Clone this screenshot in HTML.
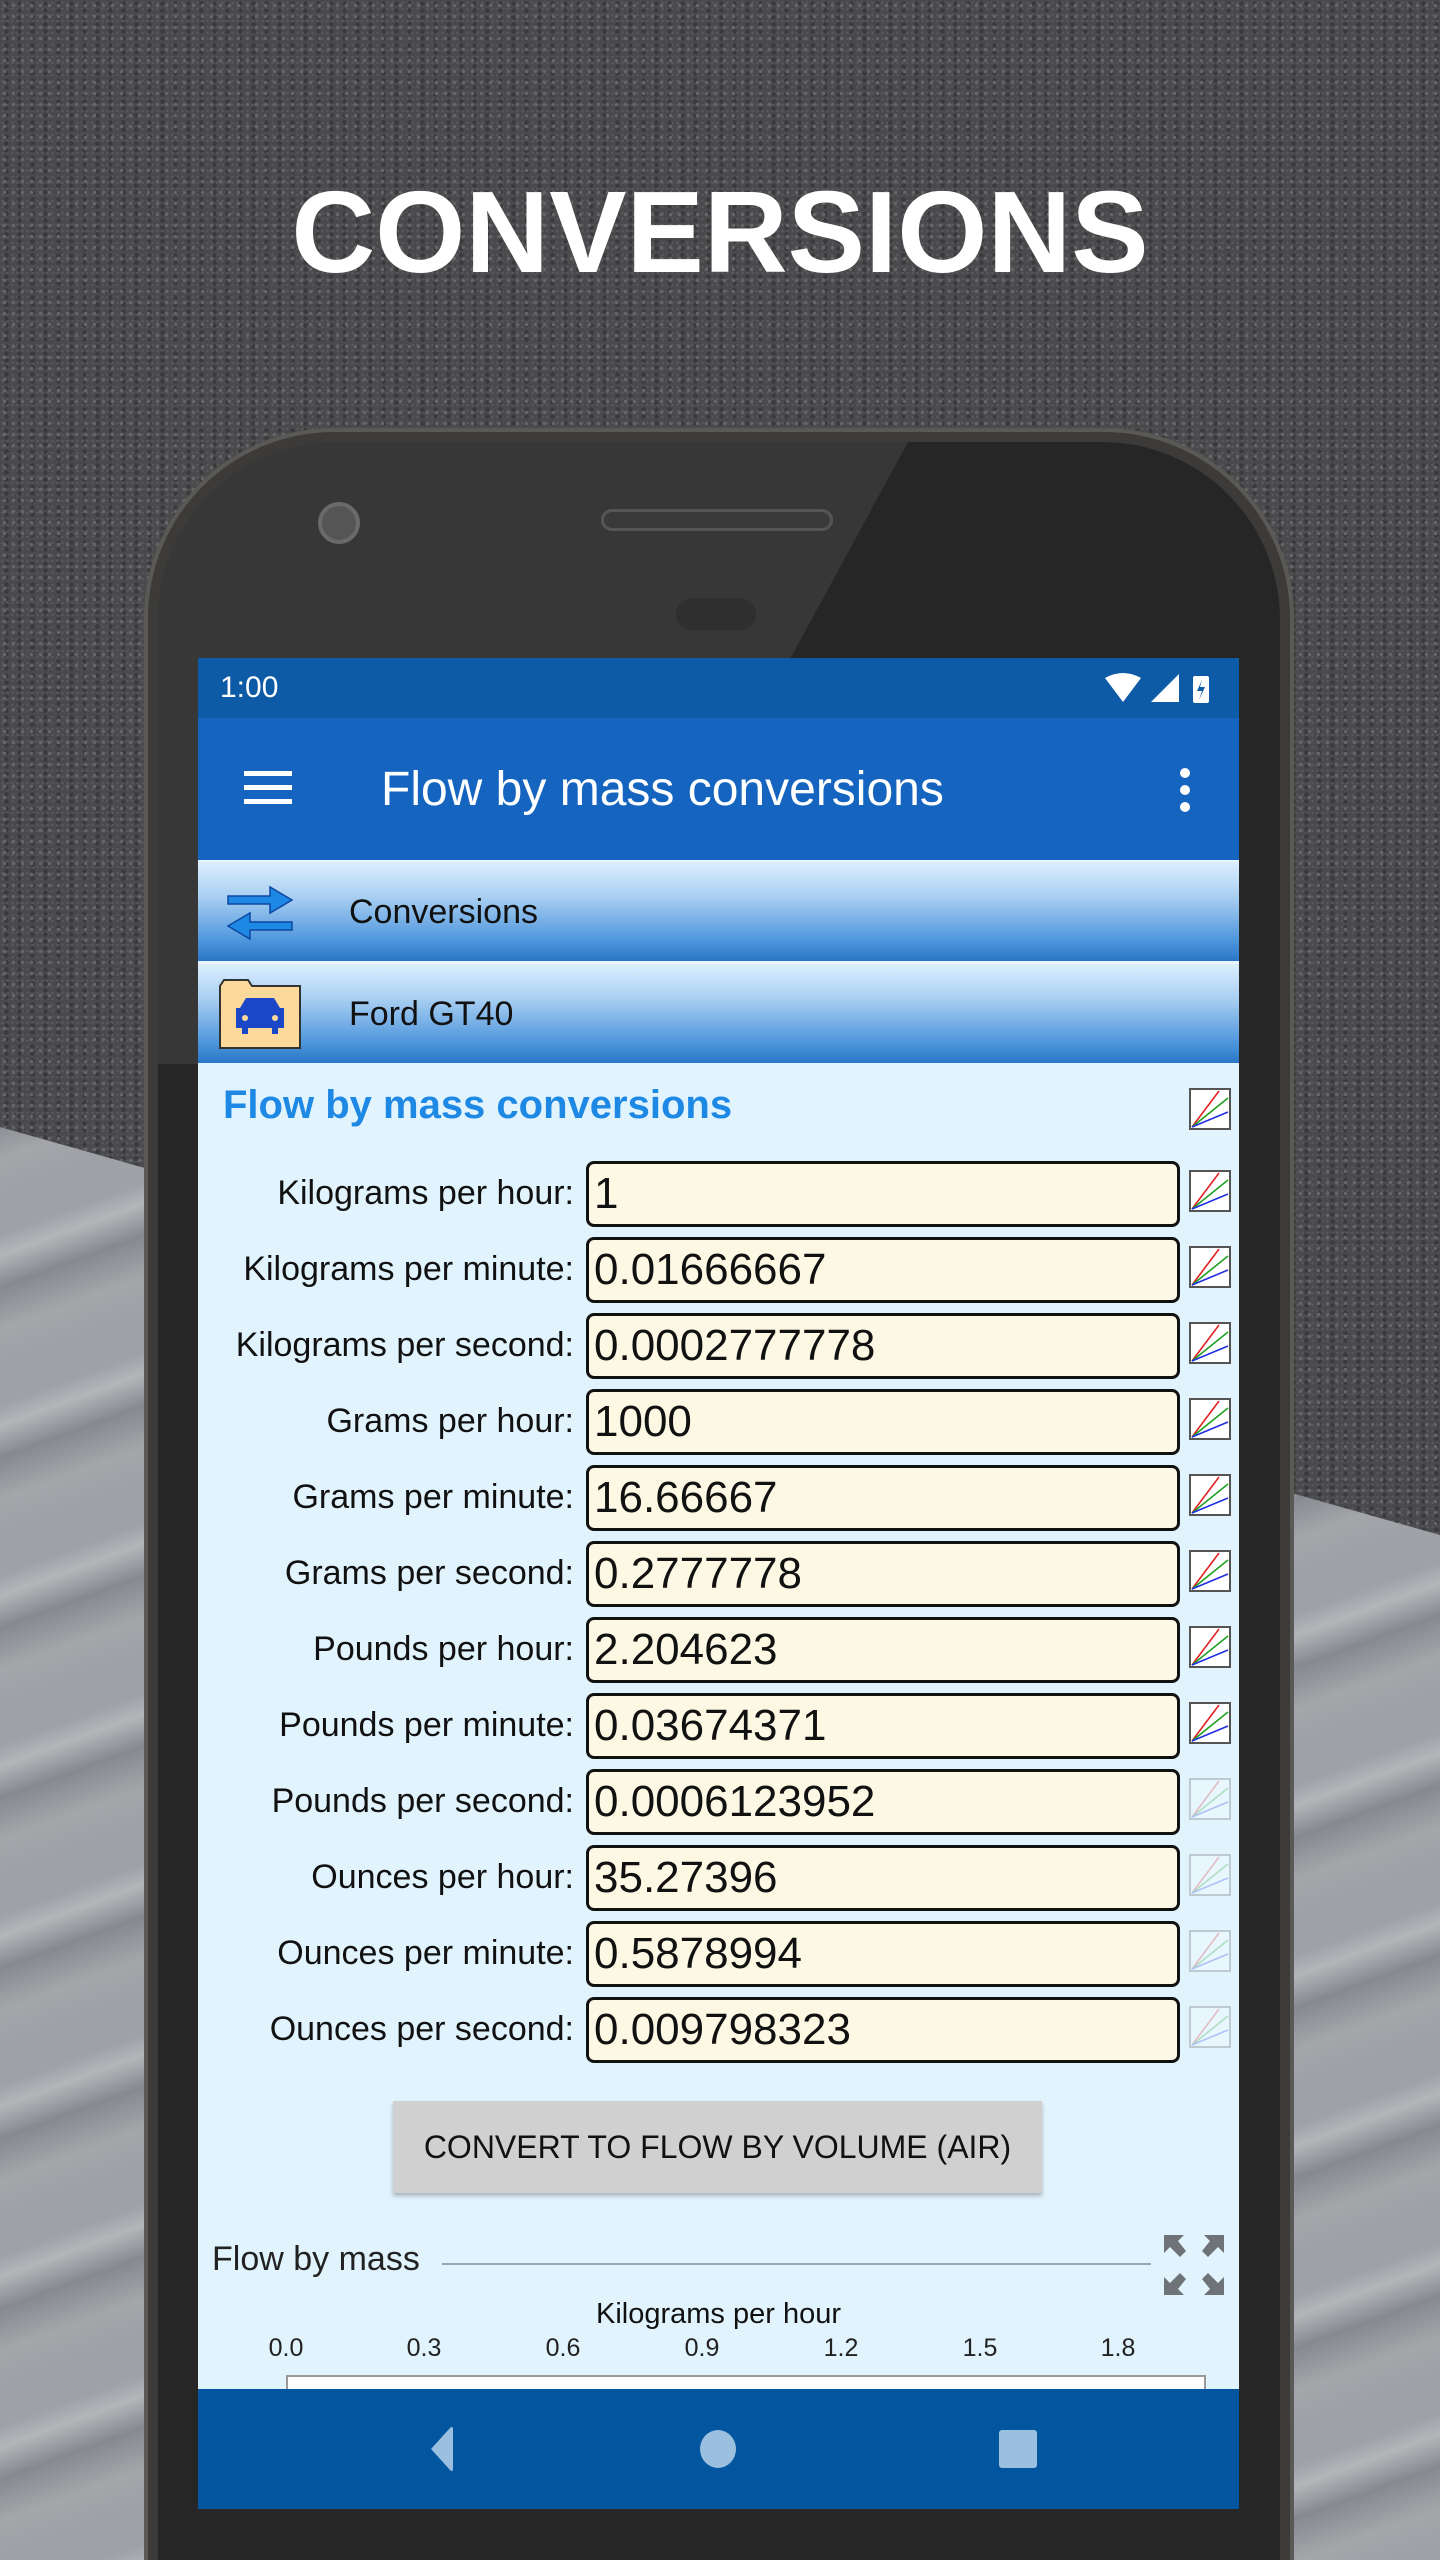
<!DOCTYPE html>
<html><head><meta charset="utf-8"><style>
*{margin:0;padding:0;box-sizing:border-box}
html,body{width:1440px;height:2560px;overflow:hidden}
body{position:relative;font-family:"Liberation Sans",sans-serif;background:#4b4b4d}
#wrap{position:absolute;left:0;top:0;width:1440px;height:2560px;overflow:hidden}
.abs{position:absolute}
#bg{left:0;top:0;width:1440px;height:2560px;background-color:#4a4a4c;background-image:radial-gradient(circle,#666668 1.5px,transparent 2px),radial-gradient(circle,#3a3a3c 2px,transparent 2.5px),radial-gradient(circle,#58585c 1px,transparent 1.5px);background-size:9px 11px,13px 7px,5px 6px}
#marble{left:0;top:0;width:1440px;height:2560px;background:repeating-linear-gradient(160deg,#9ea1a6 0 40px,#b3b5b9 60px,#86898e 90px,#a4a6aa 130px,#9ea1a6 160px);clip-path:polygon(0 1127px,1440px 1535px,1440px 2560px,0 2560px)}
h1{position:absolute;left:0;width:1440px;top:165px;text-align:center;color:#fff;font-size:116px;font-weight:bold}
#phone{left:144px;top:428px;width:1150px;height:2132px;border-radius:190px 190px 0 0;background:#3c3b39;border:4px solid #5a5956;border-bottom:none}
#bezel{left:158px;top:442px;width:1122px;height:2118px;border-radius:178px 178px 0 0;background:#262626;overflow:hidden}
#glare{left:0;top:0;width:1122px;height:622px;background:rgba(255,255,255,0.08);clip-path:polygon(0 0,750px 0,412px 622px,0 622px)}
#screen{left:198px;top:658px;width:1041px;height:1851px;background:#e1f3fd;overflow:hidden}
.sb{left:0;top:0;width:1041px;height:60px;background:#0d5aa6;color:#fff;font-size:30px;line-height:60px;padding-left:22px}
.ab{left:0;top:60px;width:1041px;height:142px;background:#1565c0;color:#fff}
.row{left:0;width:1041px;height:101px;background:linear-gradient(#dcefff 0%,#a9cff2 35%,#4d95dc 80%,#2a76c6 100%);border-top:2px solid #eaf5ff;font-size:34px;line-height:100px;color:#111}
.lab{position:absolute;right:665px;width:420px;text-align:right;font-size:34px;color:#111}
.inp{position:absolute;left:388px;width:594px;height:66px;background:#fdf8e4;border:3px solid #111;border-radius:8px;font-size:44px;line-height:60px;padding-left:5px;color:#111}
.ci{position:absolute;left:991px;width:42px;height:42px;background:#fff;border:2px solid #555}
.ci.f{opacity:.25}
.nav{left:0;top:1731px;width:1041px;height:120px;background:#02569f}
</style></head><body><div id="wrap">
<div class="abs" id="bg"></div>
<div class="abs" id="marble"></div>
<h1>CONVERSIONS</h1>
<div class="abs" id="phone"></div>
<div class="abs" id="bezel"><div class="abs" id="glare"></div></div>
<div class="abs" style="left:318px;top:502px;width:42px;height:42px;border-radius:50%;background:#555;border:4px solid #6a6a6a"></div>
<div class="abs" style="left:601px;top:509px;width:232px;height:22px;border-radius:11px;background:#3a3a3a;border:3px solid #555"></div>
<div class="abs" style="left:676px;top:598px;width:80px;height:32px;border-radius:16px;background:#2f2f2f"></div>
<div class="abs" id="screen">
 <div class="abs sb">1:00
  <svg class="abs" style="left:905px;top:14px" width="120" height="34" viewBox="0 0 120 34"><path d="M2 6 Q20 -4 38 6 L20 30Z" fill="#fff"/><path d="M48 30 L76 2 L76 30Z" fill="#fff"/><rect x="90" y="4" width="16" height="27" rx="2" fill="#fff"/><path d="M99 8 L94 19 L99 19 L96 28 L102 15 L97 15Z" fill="#0d5aa6"/></svg>
 </div>
 <div class="abs ab">
  <div class="abs" style="left:46px;top:53px;width:48px;height:5px;background:#fff;box-shadow:0 14px 0 #fff,0 28px 0 #fff"></div>
  <div class="abs" style="left:183px;top:44px;font-size:48px">Flow by mass conversions</div>
  <div class="abs" style="left:982px;top:50px;width:10px;height:10px;border-radius:50%;background:#fff;box-shadow:0 17px 0 #fff,0 34px 0 #fff"></div>
 </div>
 <div class="abs row" style="top:202px"><svg class="abs" style="left:26px;top:22px" width="72" height="58" viewBox="0 0 72 58"><path d="M4 12 H46 V3 L68 16 L46 29 V20 H4Z" fill="#1e88e5" stroke="#0d47a1" stroke-width="1.5"/><path d="M68 38 H26 V29 L4 42 L26 55 V46 H68Z" fill="#1e88e5" stroke="#0d47a1" stroke-width="1.5"/></svg><span class="abs" style="left:151px">Conversions</span></div>
 <div class="abs row" style="top:304px"><svg class="abs" style="left:20px;top:14px" width="84" height="72" viewBox="0 0 84 72"><path d="M2 8 L6 2 H30 L34 8 H82 V70 H2Z" fill="#fbd99b" stroke="#333" stroke-width="2"/><path d="M22 30 L28 20 H56 L62 30 H66 V50 H60 V56 H54 V50 H30 V56 H24 V50 H18 V30Z" fill="#1a47c8"/><circle cx="27" cy="40" r="3" fill="#fbd99b"/><circle cx="57" cy="40" r="3" fill="#fbd99b"/></svg><span class="abs" style="left:151px">Ford GT40</span></div>
 <div class="abs" style="left:25px;top:425px;font-size:40px;font-weight:bold;color:#1e88e5">Flow by mass conversions</div>
 <div class="ci" style="top:430px"></div>
 <div id="rows"></div>
 <div class="abs" style="left:195px;top:1443px;width:649px;height:92px;background:#d0d0d0;box-shadow:0 3px 4px rgba(0,0,0,.25);text-align:center;font-size:32px;line-height:92px;color:#111">CONVERT TO FLOW BY VOLUME (AIR)</div>
 <div class="abs" style="left:14px;top:1582px;font-size:34px;color:#222">Flow by mass</div>
 <div class="abs" style="left:244px;top:1605px;width:709px;height:2px;background:#9aa6b0"></div>
 <svg class="abs" style="left:964px;top:1575px" width="64" height="64" viewBox="0 0 64 64" fill="#6e7378"><path d="M2 2H22L16 8L24 18L18 24L8 14L2 20Z"/><path d="M62 2H42L48 8L40 18L46 24L56 14L62 20Z"/><path d="M2 62H22L16 56L24 46L18 40L8 50L2 44Z"/><path d="M62 62H42L48 56L40 46L46 40L56 50L62 44Z"/></svg>
 <div class="abs" style="left:0;width:1041px;top:1640px;text-align:center;font-size:29px;color:#111">Kilograms per hour</div>
 <div id="ticks"></div>
 <div class="abs" style="left:88px;top:1717px;width:920px;height:30px;border:2px solid #999;background:#fff"></div>
 <div class="abs nav">
  <svg class="abs" style="left:0;top:0" width="1041" height="120"><path d="M233 60 L252 39 Q255 36 255 41 V79 Q255 84 252 81Z" fill="#9bbfdf"/><ellipse cx="520" cy="60" rx="18" ry="19" fill="#9bbfdf"/><rect x="801" y="41" width="38" height="38" rx="3" fill="#9bbfdf"/></svg>
 </div>
</div>
</div>
<script>
var L=["Kilograms per hour:","Kilograms per minute:","Kilograms per second:","Grams per hour:","Grams per minute:","Grams per second:","Pounds per hour:","Pounds per minute:","Pounds per second:","Ounces per hour:","Ounces per minute:","Ounces per second:"];
var V=["1","0.01666667","0.0002777778","1000","16.66667","0.2777778","2.204623","0.03674371","0.0006123952","35.27396","0.5878994","0.009798323"];
var h="";
for(var i=0;i<12;i++){var t=503+i*76;
h+='<div class="lab" style="top:'+(t+13)+'px">'+L[i]+'</div><div class="inp" style="top:'+t+'px">'+V[i]+'</div><div class="ci'+(i>7?' f':'')+'" style="top:'+(t+9)+'px"></div>';}
document.getElementById('rows').innerHTML=h;
var svg='<svg width="38" height="38" viewBox="0 0 38 38"><path d="M1 37L28 1" stroke="#e02020" stroke-width="1.6"/><path d="M1 37L37 8" stroke="#20a020" stroke-width="1.6"/><path d="M1 37L37 22" stroke="#2030e0" stroke-width="1.6"/></svg>';
document.querySelectorAll('.ci').forEach(function(e){e.innerHTML=svg});
var k="",x=[88,226,365,504,643,782,920],n=["0.0","0.3","0.6","0.9","1.2","1.5","1.8"];
for(var j=0;j<7;j++)k+='<div class="abs" style="left:'+(x[j]-30)+'px;width:60px;text-align:center;top:1676px;font-size:25px;color:#222">'+n[j]+'</div><div class="abs" style="left:'+x[j]+'px;top:1717px;width:2px;height:30px;background:#bbb"></div>';
document.getElementById('ticks').innerHTML=k;
</script>
</body></html>
